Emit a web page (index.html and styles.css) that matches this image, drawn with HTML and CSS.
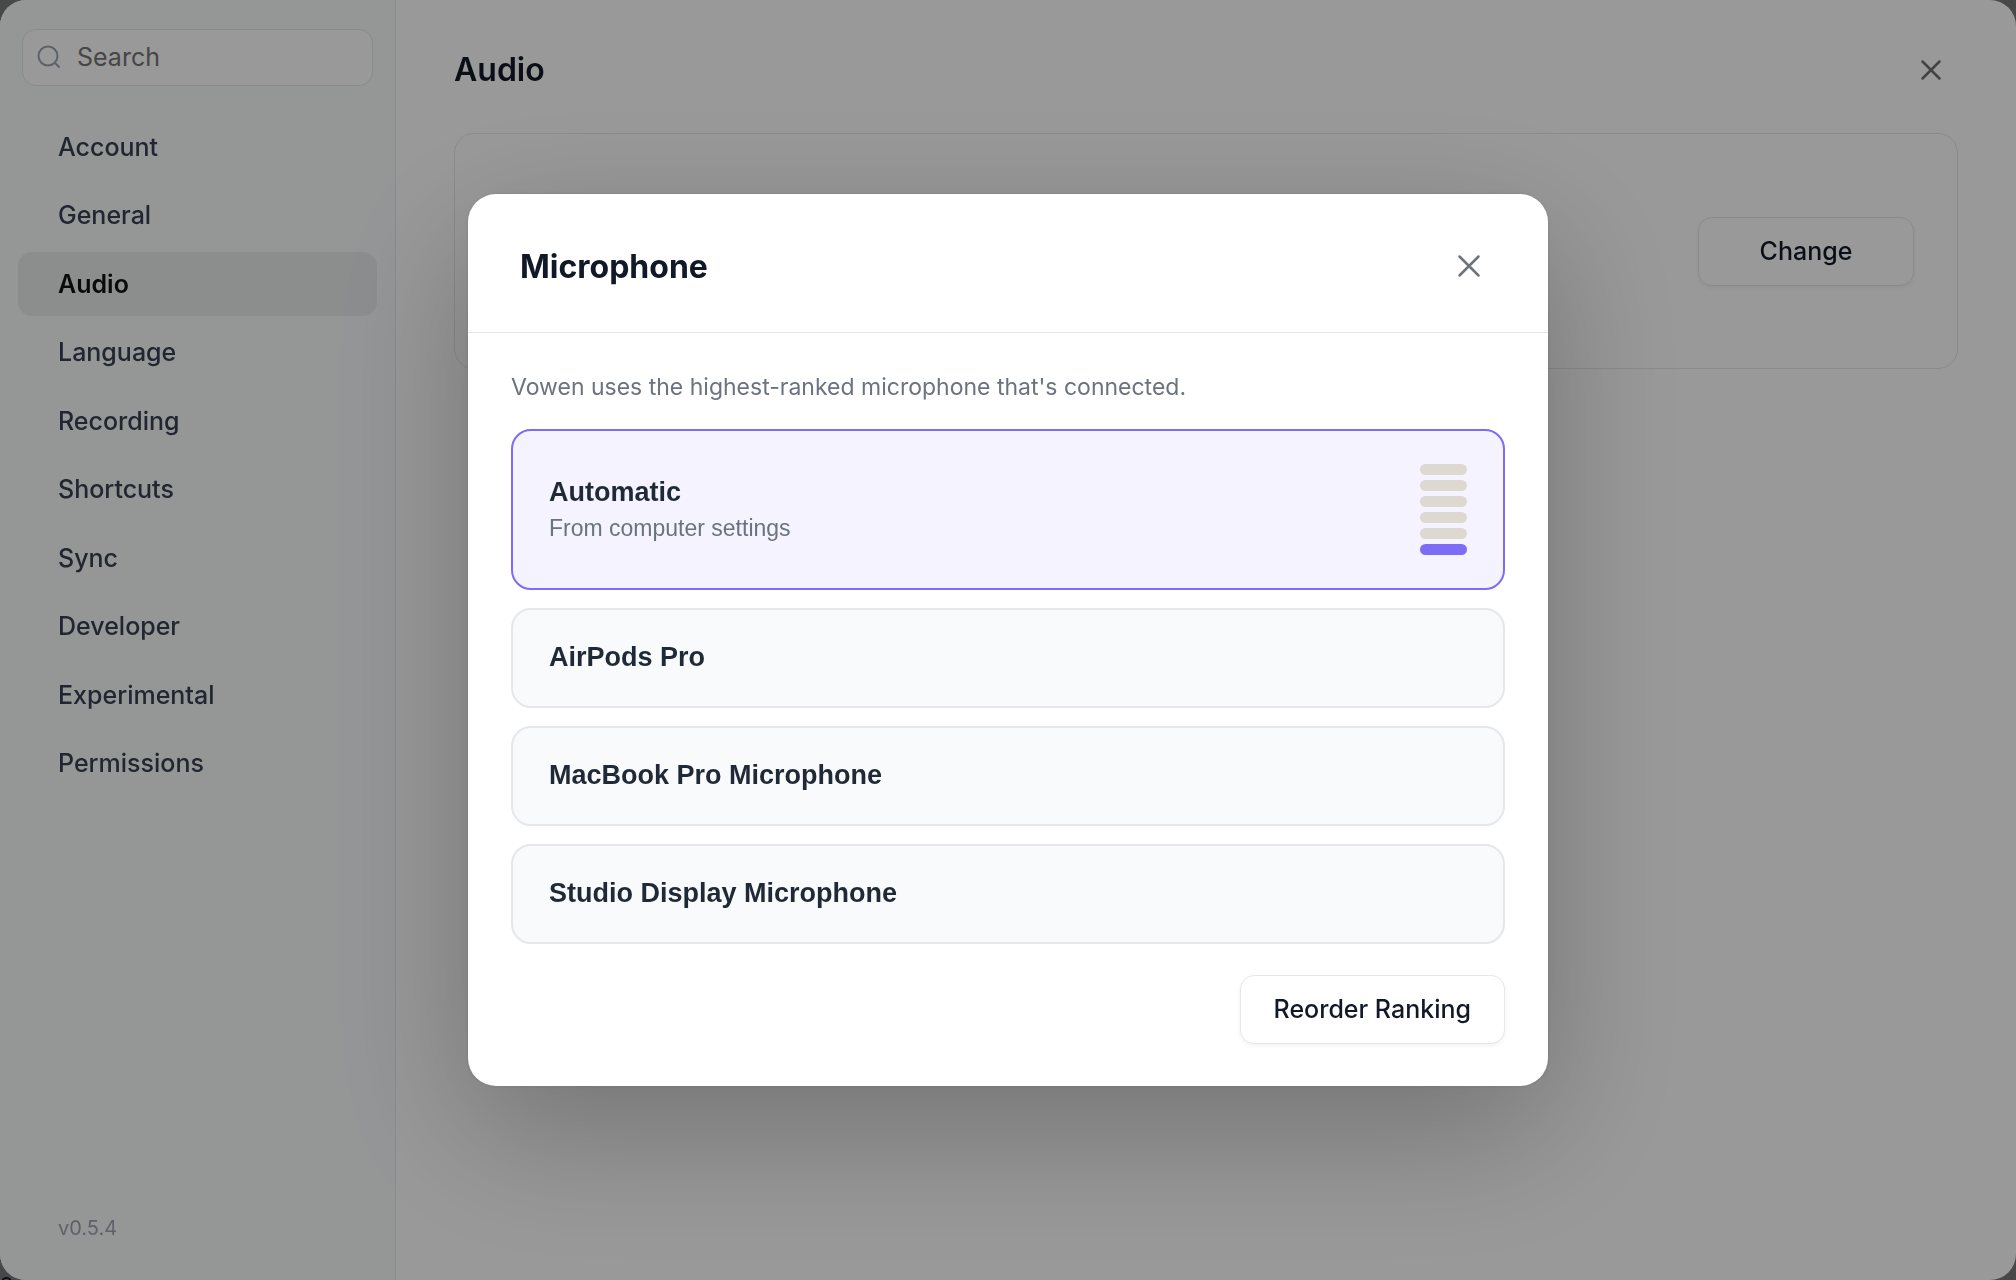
FILE: index.html
```html
<!DOCTYPE html>
<html lang="en">
<head>
  <meta charset="UTF-8">
  <meta name="viewport" content="width=device-width, initial-scale=1.0">
  <title>Vowen Settings</title>
  <link rel="stylesheet" href="styles.css">
</head>
<body>
  <span class="page-behind" aria-hidden="true">s</span>

  <div class="window">
    <aside class="sidebar">
      <label class="search">
        <svg viewBox="0 0 22 22" aria-hidden="true">
          <circle cx="10" cy="10" r="9.500"/>
          <path d="M17 17l4.500 4.500"/>
        </svg>
        <input type="search" placeholder="Search" aria-label="Search">
      </label>

      <nav class="nav">
        <a href="#account">Account</a>
        <a href="#general">General</a>
        <a href="#audio" class="active">Audio</a>
        <a href="#language">Language</a>
        <a href="#recording">Recording</a>
        <a href="#shortcuts">Shortcuts</a>
        <a href="#sync">Sync</a>
        <a href="#developer">Developer</a>
        <a href="#experimental">Experimental</a>
        <a href="#permissions">Permissions</a>
      </nav>

      <span class="version">v0.5.4</span>
    </aside>

    <main class="content">
      <header class="content-header">
        <h1>Audio</h1>
        <button class="close-button" type="button" aria-label="Close settings">
          <svg viewBox="0 0 20 20"><path d="M1.500 1.500l17 17M18.500 1.500l-17 17"/></svg>
        </button>
      </header>
      <section class="panel">
        <button class="button change-button" type="button">Change</button>
      </section>
    </main>
  </div>

  <div class="overlay">
    <div class="modal" role="dialog" aria-modal="true" aria-labelledby="modal-title">
      <header class="modal-header">
        <h2 id="modal-title">Microphone</h2>
        <button class="close-button" type="button" aria-label="Close">
          <svg viewBox="0 0 20 20"><path d="M.5.5l19 19M19.500.5l-19 19"/></svg>
        </button>
      </header>

      <div class="modal-body">
        <p class="hint">Vowen uses the highest-ranked microphone that's connected.</p>

        <div class="devices">
          <button class="device selected" type="button">
            <span class="device-text">
              <span class="device-name">Automatic</span>
              <span class="device-note">From computer settings</span>
            </span>
            <span class="meter">
              <span></span>
              <span></span>
              <span></span>
              <span></span>
              <span></span>
              <span class="on"></span>
            </span>
          </button>
          <button class="device" type="button"><span class="device-name">AirPods Pro</span></button>
          <button class="device" type="button"><span class="device-name">MacBook Pro Microphone</span></button>
          <button class="device" type="button"><span class="device-name">Studio Display Microphone</span></button>
        </div>

        <div class="modal-actions">
          <button class="button" type="button">Reorder Ranking</button>
        </div>
      </div>
    </div>
  </div>
</body>
</html>
```
FILE: styles.css
```css
* {
  margin: 0;
  padding: 0;
  box-sizing: border-box;
}

body {
  font-family: Inter, "Liberation Sans", sans-serif;
  background: #787878;
  color: #111827;
  min-height: 100vh;
  overflow: hidden;
}

button,
input {
  font: inherit;
  color: inherit;
}

button {
  cursor: pointer;
}

/* Text of the page under the window, showing at the rounded corner */
.page-behind {
  position: fixed;
  left: 0;
  bottom: -14px;
  font-size: 24px;
  line-height: 24px;
}

/* Settings window */
.window {
  position: relative;
  display: flex;
  min-height: 100vh;
  background: #fff;
  border-radius: 26px;
  overflow: hidden;
}

.sidebar {
  display: flex;
  flex-direction: column;
  width: 396px;
  padding: 29px 18px 36px;
  background: #f9fafb;
  border-right: 1px solid #e5e7eb;
}

.search {
  display: flex;
  align-items: center;
  gap: 17px;
  height: 57px;
  margin: 0 4px 29px;
  padding: 0 15px 1px;
  background: #fff;
  border: 1px solid #e5e7eb;
  border-radius: 14px;
}

.search svg {
  flex: none;
  width: 22px;
  height: 22px;
  fill: none;
  stroke: #9ca3af;
  stroke-width: 2;
  overflow: visible;
}

.search input {
  width: 100%;
  border: none;
  outline: none;
  background: none;
  font-size: 25px;
}

.search input::placeholder {
  color: #757575;
}

.nav {
  display: flex;
  flex-direction: column;
  justify-content: space-between;
  height: 680px;
}

.nav a {
  padding: 0 40px;
  line-height: 64px;
  border-radius: 14px;
  color: #374151;
  font-size: 25px;
  font-weight: 500;
  text-decoration: none;
}

.nav a.active {
  background: rgba(0, 0, 0, 0.06);
  color: #111;
  font-weight: 600;
}

.version {
  margin-top: auto;
  padding-left: 40px;
  color: #9ca3af;
  font-size: 20px;
  line-height: 32px;
}

.content {
  flex: 1;
  padding: 41px 58px;
}

.content-header {
  display: flex;
  align-items: center;
  justify-content: space-between;
  height: 58px;
  margin-bottom: 34px;
}

h1 {
  font-size: 32px;
  font-weight: 600;
  line-height: 38px;
}

.close-button {
  display: flex;
  align-items: center;
  justify-content: center;
  width: 54px;
  height: 54px;
  border: none;
  background: none;
}

.close-button svg {
  width: 20px;
  height: 20px;
  fill: none;
  stroke: #6b7280;
  stroke-width: 2.5;
  stroke-linecap: round;
  overflow: visible;
}

.content-header .close-button svg {
  stroke: #707070;
}

.panel {
  display: flex;
  align-items: center;
  justify-content: flex-end;
  height: 236px;
  padding: 0 43px;
  border: 1px solid #e5e7eb;
  border-radius: 20px;
}

.button {
  height: 69px;
  padding: 0 33px 1px;
  background: #fff;
  border: 1px solid #e5e7eb;
  border-radius: 14px;
  box-shadow: 0 2px 4px rgba(0, 0, 0, 0.05);
  font-size: 25px;
  font-weight: 500;
}

.change-button {
  width: 216px;
}

/* Microphone dialog */
.overlay {
  position: fixed;
  inset: 0;
  display: flex;
  align-items: center;
  justify-content: center;
  background: rgba(0, 0, 0, 0.4);
}

.modal {
  width: 1080px;
  background: #fff;
  border-radius: 28px;
  box-shadow:
    0 45px 140px rgba(0, 0, 0, 0.25),
    0 0 4px rgba(0, 0, 0, 0.1);
}

.modal-header {
  display: flex;
  align-items: center;
  justify-content: space-between;
  padding: 45px 52px 39px;
  border-bottom: 1px solid #e5e7eb;
}

.modal-header h2 {
  font-size: 32px;
  font-weight: 700;
}

.modal-body {
  padding: 36px 43px 42px;
}

.hint {
  margin-bottom: 24px;
  color: #6b7280;
  font-size: 23px;
  line-height: 36px;
}

.devices {
  display: flex;
  flex-direction: column;
  gap: 18px;
}

.device {
  display: flex;
  align-items: center;
  justify-content: space-between;
  min-height: 100px;
  padding: 0 36px 2px;
  background: #f9fafb;
  border: 2px solid #e5e7eb;
  border-radius: 20px;
  font-family: "Liberation Sans", Arial, sans-serif;
  text-align: left;
}

.device.selected {
  min-height: 161px;
  padding-bottom: 0;
  background: #f5f3ff;
  border-color: #7c6cf6;
}

.device-text {
  display: flex;
  flex-direction: column;
}

.device-name {
  color: #1f2937;
  font-size: 27px;
  font-weight: 700;
  line-height: 36px;
}

.device-note {
  color: #6b7280;
  font-size: 23px;
  line-height: 36px;
}

.meter {
  display: flex;
  flex-direction: column;
  gap: 5px;
}

.meter span {
  width: 47px;
  height: 11px;
  border-radius: 6px;
  background: #ddd8d0;
}

.meter .on {
  background: #7c6cf6;
}

.modal-actions {
  display: flex;
  justify-content: flex-end;
  margin-top: 31px;
}
```
